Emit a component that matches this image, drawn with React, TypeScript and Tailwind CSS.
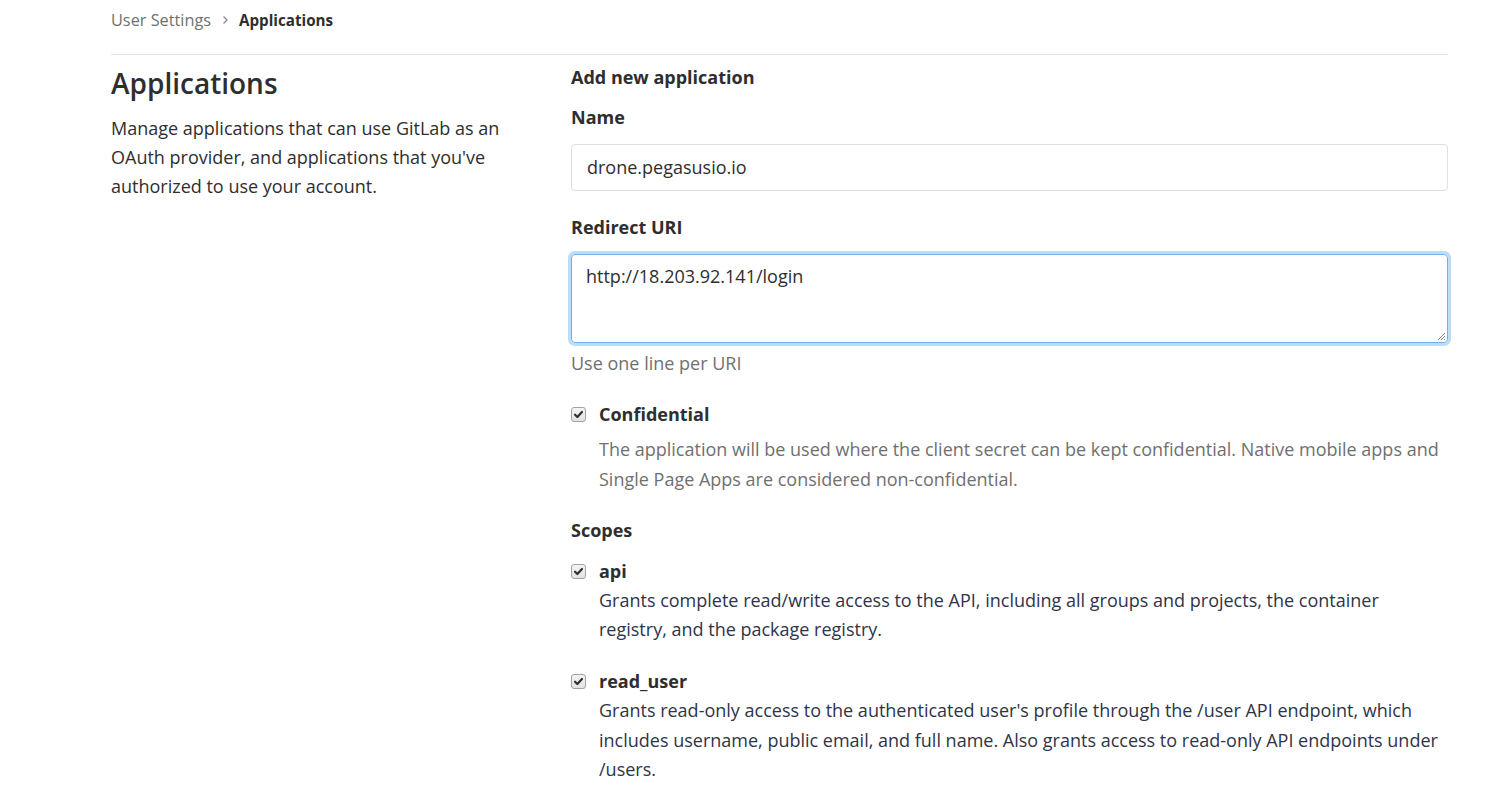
import React from "react";

function CheckBox() {
  return (
    <span className="inline-flex h-[15px] w-[15px] shrink-0 items-center justify-center rounded-[3px] border border-[#a3a3a3] bg-gradient-to-b from-[#f4f4f4] to-[#e2e2e2]">
      <svg width="11" height="11" viewBox="0 0 12 12" fill="none">
        <path d="M2.2 6.2 4.8 8.8 9.8 3.2" stroke="#2e2e2e" strokeWidth="2.3" strokeLinecap="round" strokeLinejoin="round" />
      </svg>
    </span>
  );
}

export default function App() {
  return (
    <div className="min-h-screen bg-white text-[#2e2e2e]" style={{ fontFamily: "'Open Sans', 'Noto Sans', sans-serif" }}>
      <div className="ml-[111px] w-[1337px]">
        {/* breadcrumb */}
        <div className="flex h-[54px] items-center gap-[10px] pb-[14px] leading-[24px]">
          <span className="text-[16.3px] text-[#707070]">User Settings</span>
          <svg width="8" height="10" viewBox="0 0 8 10" fill="none">
            <path d="M2.5 1.5 6 5 2.5 8.5" stroke="#8a8a8a" strokeWidth="1.3" />
          </svg>
          <span className="text-[15.2px] font-bold text-[#2e2e2e]">Applications</span>
        </div>
        <div className="h-px bg-[#e5e5e5]" />

        <div className="flex">
          {/* left */}
          <div className="w-[460px] shrink-0 pr-[40px]">
            <h4 className="mt-[10px] text-[28px] font-semibold leading-[36px] text-[#2e2e2e]">Applications</h4>
            <p className="mt-[13px] text-[18px] leading-[29px] text-[#2e2e2e]">
              Manage applications that can use GitLab as an
              <br />
              OAuth provider, and applications that you've
              <br />
              authorized to use your account.
            </p>
          </div>

          {/* right */}
          <div className="flex-1">
            <h5 className="mt-[9px] text-[18px] font-bold leading-[26px]">Add new application</h5>

            <label className="mt-[14px] block text-[18px] font-bold leading-[26px]">Name</label>
            <div className="mt-[14px] flex h-[47px] items-center rounded-[4px] border border-[#dfdfdf] px-[15px] text-[18px] text-[#2e2e2e]">
              drone.pegasusio.io
            </div>

            <label className="mt-[23px] block text-[18px] font-bold leading-[26px]">Redirect URI</label>
            <div className="relative mt-[14px] h-[89px] rounded-[4px] border border-[#73afea] px-[14px] pt-[7px] text-[18px] leading-[28px] shadow-[0_0_0_3px_#bcdcfa]">
              http://18.203.92.141/login
              <svg className="absolute bottom-[1px] right-[1px]" width="9" height="9" viewBox="0 0 9 9" fill="none">
                <path d="M8 1 1 8M8 4 4 8M8 7 7 8" stroke="#8a8a8a" strokeWidth="1" />
              </svg>
            </div>
            <p className="mt-[7px] text-[18px] leading-[26px] text-[#707070]">Use one line per URI</p>

            <div className="mt-[25px] flex items-center gap-[13px]">
              <CheckBox />
              <span className="text-[18px] font-bold leading-[26px]">Confidential</span>
            </div>
            <p className="ml-[28px] mt-[7px] text-[18px] leading-[30px] text-[#707070]">
              The application will be used where the client secret can be kept confidential. Native mobile apps and
              <br />
              Single Page Apps are considered non-confidential.
            </p>

            <h5 className="mt-[23px] text-[18px] font-bold leading-[26px]">Scopes</h5>

            <div className="mt-[15px] flex items-center gap-[13px]">
              <CheckBox />
              <span className="text-[18px] font-bold leading-[26px]">api</span>
            </div>
            <p className="ml-[28px] mt-[2px] text-[18px] leading-[29px] text-[#2f3449]">
              Grants complete read/write access to the API, including all groups and projects, the container
              <br />
              registry, and the package registry.
            </p>

            <div className="mt-[24px] flex items-center gap-[13px]">
              <CheckBox />
              <span className="text-[18px] font-bold leading-[26px]">read_user</span>
            </div>
            <p className="ml-[28px] mt-[2px] text-[18px] leading-[29.5px] text-[#2f3449]">
              Grants read-only access to the authenticated user's profile through the /user API endpoint, which
              <br />
              includes username, public email, and full name. Also grants access to read-only API endpoints under
              <br />
              /users.
            </p>
          </div>
        </div>
      </div>
    </div>
  );
}
